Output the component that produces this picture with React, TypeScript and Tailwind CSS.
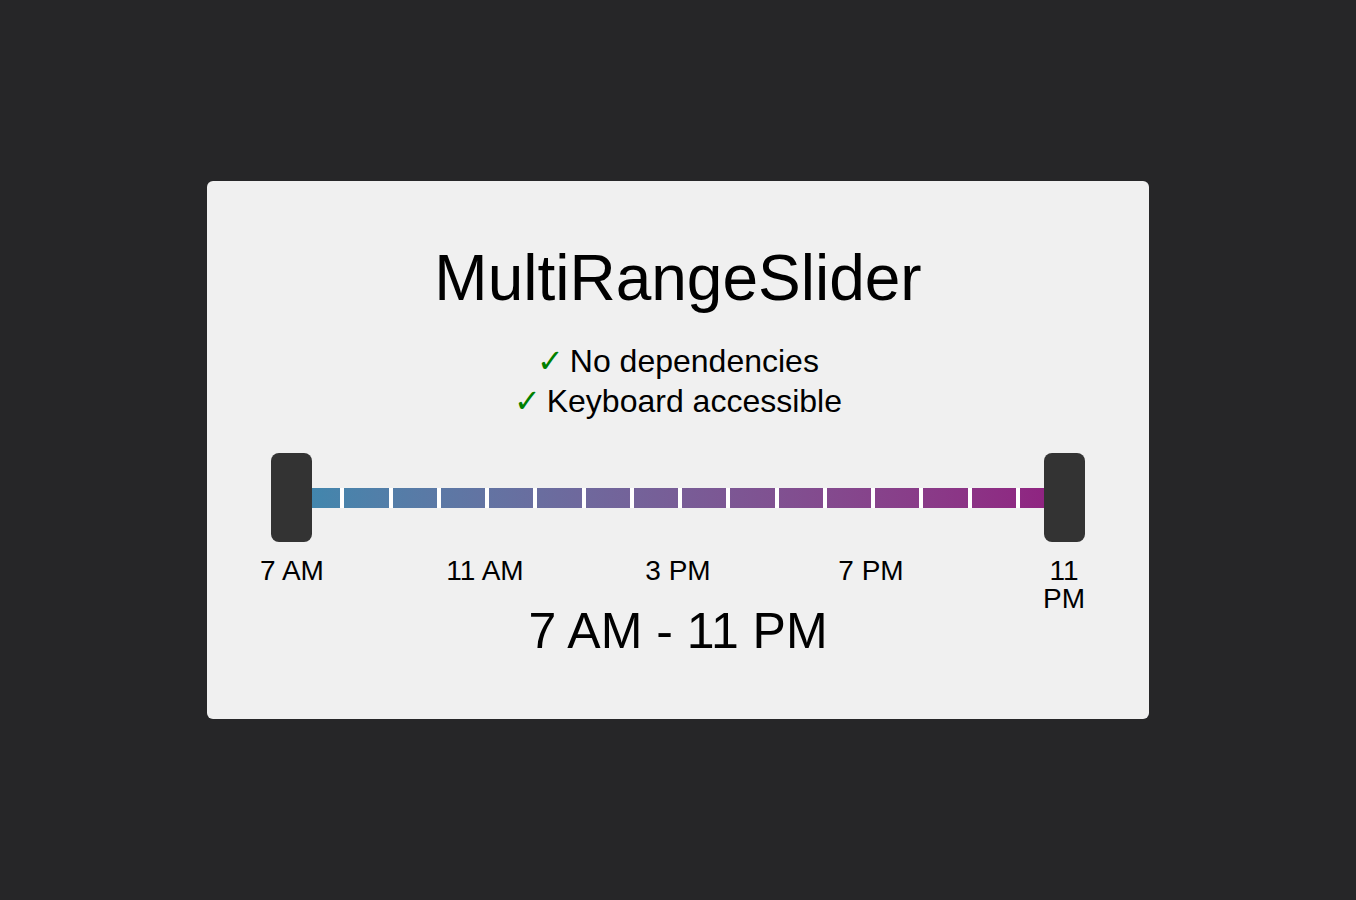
import React from "react";

const HOURS = Array.from({ length: 16 }, (_, i) => i);
const TICKS = ["7 AM", "11 AM", "3 PM", "7 PM", "11 PM"];

function Feature({ label }: { label: string }) {
  return (
    <div className="text-[32px] leading-[40px] text-black">
      <span
        className="mr-[-3px] font-bold text-[#008000]"
        style={{ fontFamily: '"DejaVu Sans", sans-serif' }}
      >
        ✓
      </span>{" "}
      {label}
    </div>
  );
}

export default function App() {
  return (
    <div
      className="flex min-h-[900px] w-full items-center justify-center bg-[#262628]"
      style={{ fontFamily: '"Liberation Sans", Arial, Helvetica, sans-serif' }}
    >
      <div className="flex h-[538px] w-[942px] flex-col items-center rounded-[6px] bg-[#f0f0f0] pt-[61px]">
        <h1 className="text-[64px] font-normal leading-[72px] text-black">MultiRangeSlider</h1>

        <div className="mt-[27px] flex flex-col items-center">
          <Feature label="No dependencies" />
          <Feature label="Keyboard accessible" />
        </div>

        {/* slider: gradient track split into hourly steps, with two thumbs */}
        <div className="relative mt-[32px] flex h-[89px] w-[772px] items-center">
          <div className="flex h-[20px] w-full bg-gradient-to-r from-[#3c88ae] to-[#901f80]">
            {HOURS.map((h) => (
              <div key={h} className="flex-1 border-l-4 border-white" />
            ))}
          </div>
          <div
            role="slider"
            aria-label="Start time"
            className="absolute left-[-21px] top-0 h-[89px] w-[41px] rounded-[8px] bg-[#333333]"
          />
          <div
            role="slider"
            aria-label="End time"
            className="absolute right-[-21px] top-0 h-[89px] w-[41px] rounded-[8px] bg-[#333333]"
          />
        </div>

        <div className="mt-[15px] flex h-[28px] w-[772px] justify-between text-[28px] leading-[28px] text-black">
          {TICKS.map((t, i) => (
            <div key={t} className="flex w-0 justify-center">
              <span className={i === TICKS.length - 1 ? "w-min text-center" : "whitespace-nowrap"}>{t}</span>
            </div>
          ))}
        </div>

        <div className="mt-[18px] text-[50px] leading-[56px] text-black">7 AM - 11 PM</div>
      </div>
    </div>
  );
}
